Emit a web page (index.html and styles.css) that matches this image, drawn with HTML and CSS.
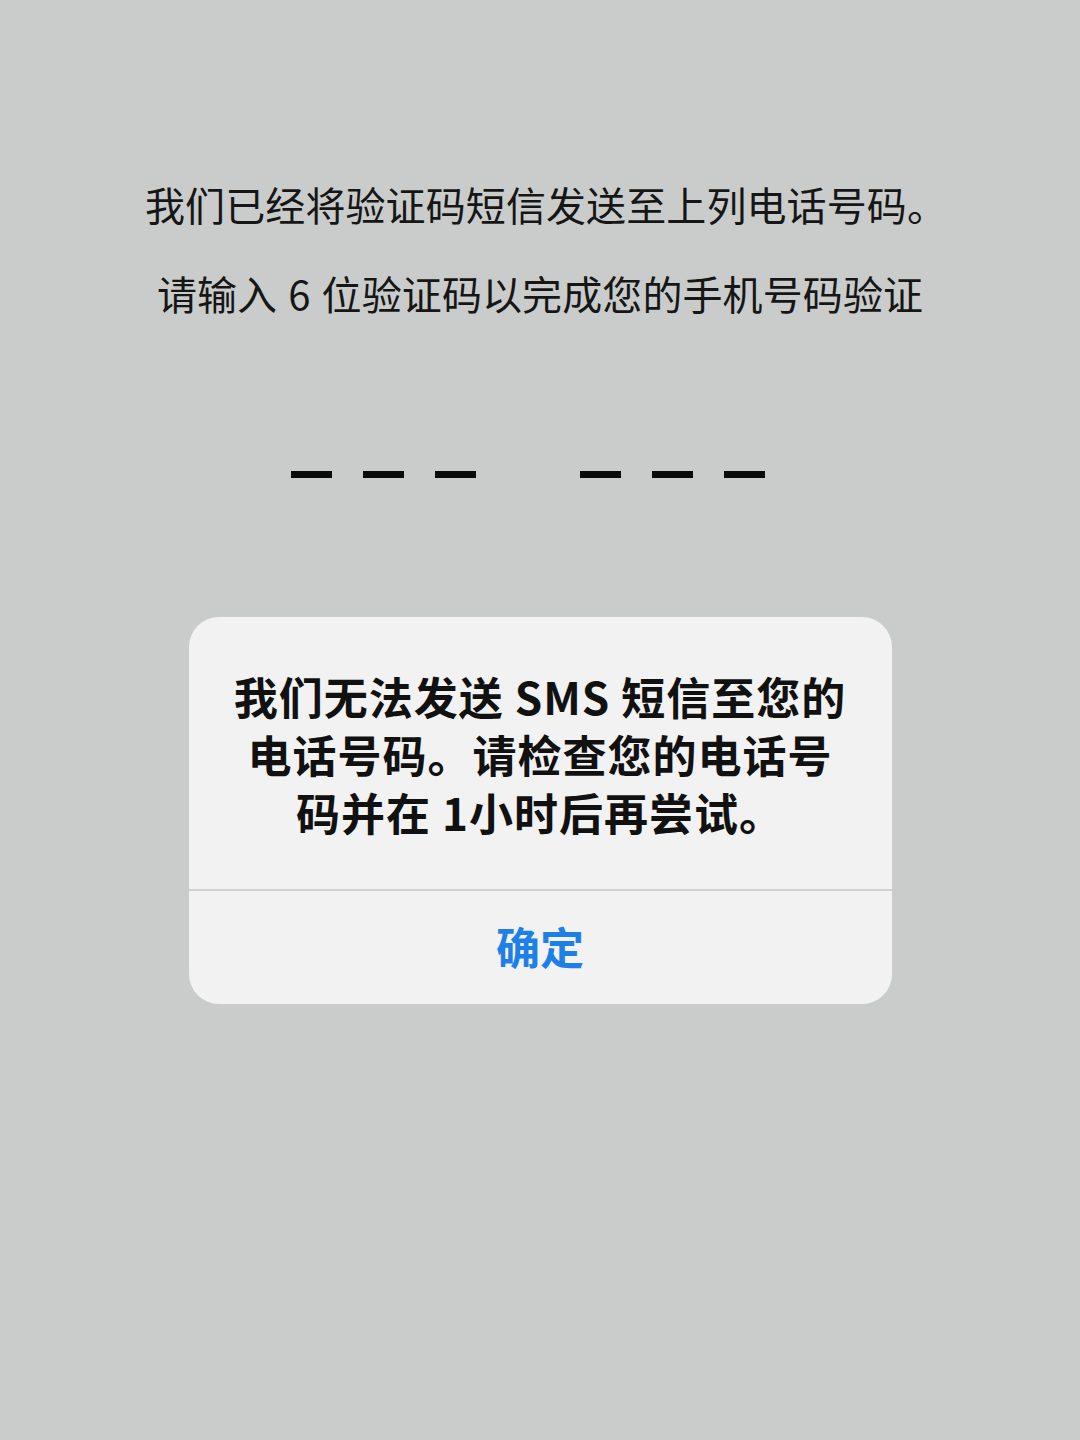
FILE: index.html
```html
<!DOCTYPE html>
<html lang="zh-CN">
<head>
    <meta charset="UTF-8">
    <meta name="viewport" content="width=device-width, initial-scale=1.0">
    <title>验证手机号码</title>
    <link rel="stylesheet" href="styles.css">
</head>
<body>
    <div class="screen">
        <div class="intro">
            <p class="intro-line">我们已经将验证码短信发送至上列电话号码。</p>
            <p class="intro-line">请输入 6 位验证码以完成您的手机号码验证</p>
        </div>
        <div class="code-boxes">
            <div class="code-group">
                <span class="dash"></span>
                <span class="dash"></span>
                <span class="dash"></span>
            </div>
            <div class="code-group">
                <span class="dash"></span>
                <span class="dash"></span>
                <span class="dash"></span>
            </div>
        </div>
        <div class="alert">
            <div class="alert-message">
                我们无法发送 SMS 短信至您的<br>
                电话号码。请检查您的电话号<br>
                码并在 1小时后再尝试。
            </div>
            <button class="alert-button" type="button">确定</button>
        </div>
    </div>
</body>
</html>
```

FILE: styles.css
```css
html, body {
    margin: 0;
    padding: 0;
}
body {
    background-color: #c9cccb;
    font-family: "Noto Sans CJK SC", "Noto Sans", sans-serif;
    color: #161616;
}
.screen {
    width: 1080px;
    height: 1440px;
    display: flex;
    flex-direction: column;
    align-items: center;
}
.intro {
    margin-top: 175px;
    display: flex;
    flex-direction: column;
    align-items: center;
    gap: 31px;
}
.intro-line {
    margin: 0;
    font-size: 40px;
    line-height: 58px;
    font-weight: 400;
    letter-spacing: 0.1px;
    word-spacing: 2px;
}
.intro-line:first-child {
    margin-left: 12px;
}
.code-boxes {
    margin-top: 149px;
    display: flex;
    gap: 104px;
    margin-right: 24px;
}
.code-group {
    display: flex;
    gap: 31px;
}
.dash {
    display: block;
    width: 41px;
    height: 7px;
    background-color: #0a0a0a;
}
.alert {
    margin-top: 139px;
    width: 703px;
    background-color: #f2f2f2;
    border-radius: 30px;
    display: flex;
    flex-direction: column;
    overflow: hidden;
}
.alert-message {
    padding: 50px 10px 48px;
    text-align: center;
    font-size: 44px;
    line-height: 58px;
    font-weight: 600;
    letter-spacing: 1px;
    color: #111;
}
.alert-button {
    height: 115px;
    border: none;
    border-top: 2px solid #d0d0d2;
    background: transparent;
    font-family: "Noto Sans CJK SC", "Noto Sans", sans-serif;
    font-size: 44px;
    font-weight: 600;
    color: #1e7fe6;
    cursor: pointer;
    padding: 0 0 4px;
}
```
